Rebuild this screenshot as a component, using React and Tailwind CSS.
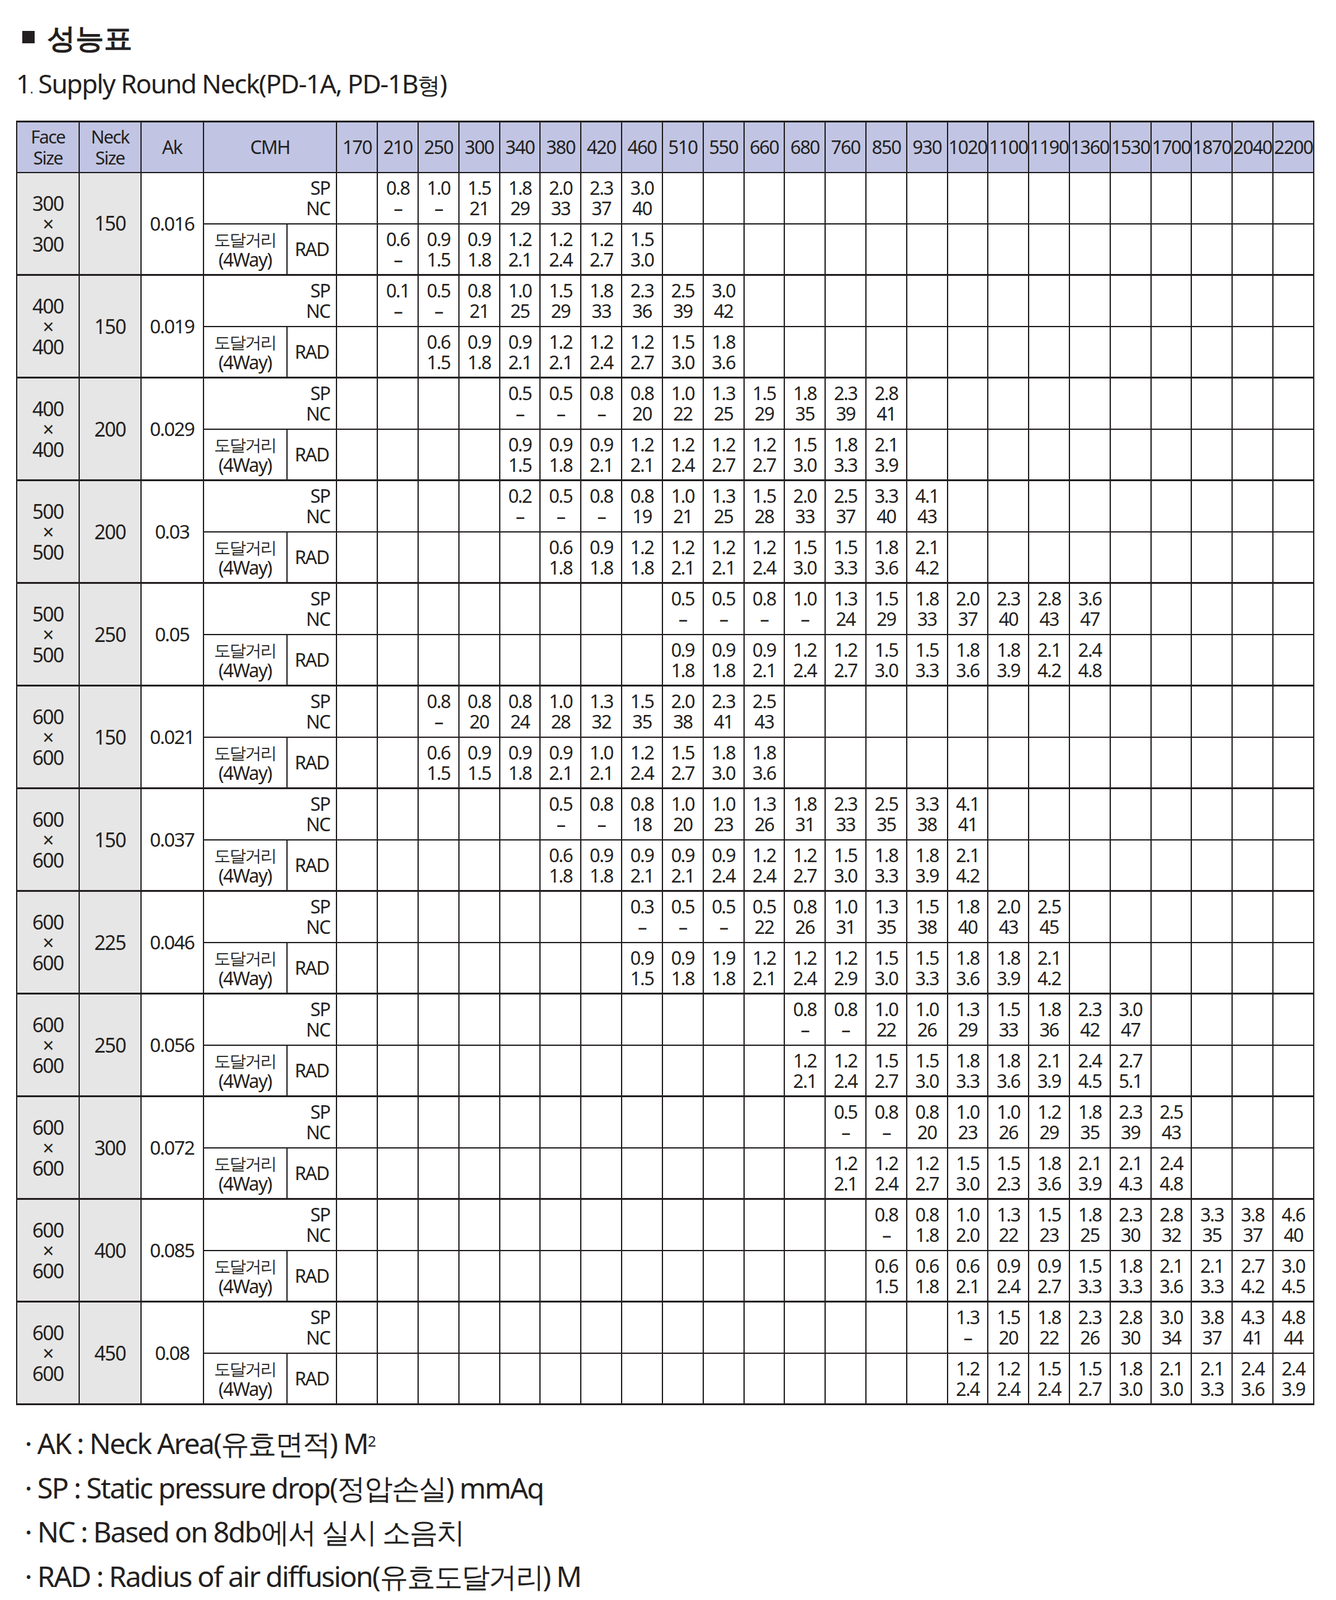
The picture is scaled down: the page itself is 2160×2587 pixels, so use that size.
import React from "react";

const COLS = [170,210,250,300,340,380,420,460,510,550,660,680,760,850,930,1020,1100,1190,1360,1530,1700,1870,2040,2200];
const d = "–";
const G = [
  ["300","150","0.016",1,["0.8","1.0","1.5","1.8","2.0","2.3","3.0"],[d,d,"21","29","33","37","40"],1,["0.6","0.9","0.9","1.2","1.2","1.2","1.5"],[d,"1.5","1.8","2.1","2.4","2.7","3.0"]],
  ["400","150","0.019",1,["0.1","0.5","0.8","1.0","1.5","1.8","2.3","2.5","3.0"],[d,d,"21","25","29","33","36","39","42"],2,["0.6","0.9","0.9","1.2","1.2","1.2","1.5","1.8"],["1.5","1.8","2.1","2.1","2.4","2.7","3.0","3.6"]],
  ["400","200","0.029",4,["0.5","0.5","0.8","0.8","1.0","1.3","1.5","1.8","2.3","2.8"],[d,d,d,"20","22","25","29","35","39","41"],4,["0.9","0.9","0.9","1.2","1.2","1.2","1.2","1.5","1.8","2.1"],["1.5","1.8","2.1","2.1","2.4","2.7","2.7","3.0","3.3","3.9"]],
  ["500","200","0.03",4,["0.2","0.5","0.8","0.8","1.0","1.3","1.5","2.0","2.5","3.3","4.1"],[d,d,d,"19","21","25","28","33","37","40","43"],5,["0.6","0.9","1.2","1.2","1.2","1.2","1.5","1.5","1.8","2.1"],["1.8","1.8","1.8","2.1","2.1","2.4","3.0","3.3","3.6","4.2"]],
  ["500","250","0.05",8,["0.5","0.5","0.8","1.0","1.3","1.5","1.8","2.0","2.3","2.8","3.6"],[d,d,d,d,"24","29","33","37","40","43","47"],8,["0.9","0.9","0.9","1.2","1.2","1.5","1.5","1.8","1.8","2.1","2.4"],["1.8","1.8","2.1","2.4","2.7","3.0","3.3","3.6","3.9","4.2","4.8"]],
  ["600","150","0.021",2,["0.8","0.8","0.8","1.0","1.3","1.5","2.0","2.3","2.5"],[d,"20","24","28","32","35","38","41","43"],2,["0.6","0.9","0.9","0.9","1.0","1.2","1.5","1.8","1.8"],["1.5","1.5","1.8","2.1","2.1","2.4","2.7","3.0","3.6"]],
  ["600","150","0.037",5,["0.5","0.8","0.8","1.0","1.0","1.3","1.8","2.3","2.5","3.3","4.1"],[d,d,"18","20","23","26","31","33","35","38","41"],5,["0.6","0.9","0.9","0.9","0.9","1.2","1.2","1.5","1.8","1.8","2.1"],["1.8","1.8","2.1","2.1","2.4","2.4","2.7","3.0","3.3","3.9","4.2"]],
  ["600","225","0.046",7,["0.3","0.5","0.5","0.5","0.8","1.0","1.3","1.5","1.8","2.0","2.5"],[d,d,d,"22","26","31","35","38","40","43","45"],7,["0.9","0.9","1.9","1.2","1.2","1.2","1.5","1.5","1.8","1.8","2.1"],["1.5","1.8","1.8","2.1","2.4","2.9","3.0","3.3","3.6","3.9","4.2"]],
  ["600","250","0.056",11,["0.8","0.8","1.0","1.0","1.3","1.5","1.8","2.3","3.0"],[d,d,"22","26","29","33","36","42","47"],11,["1.2","1.2","1.5","1.5","1.8","1.8","2.1","2.4","2.7"],["2.1","2.4","2.7","3.0","3.3","3.6","3.9","4.5","5.1"]],
  ["600","300","0.072",12,["0.5","0.8","0.8","1.0","1.0","1.2","1.8","2.3","2.5"],[d,d,"20","23","26","29","35","39","43"],12,["1.2","1.2","1.2","1.5","1.5","1.8","2.1","2.1","2.4"],["2.1","2.4","2.7","3.0","2.3","3.6","3.9","4.3","4.8"]],
  ["600","400","0.085",13,["0.8","0.8","1.0","1.3","1.5","1.8","2.3","2.8","3.3","3.8","4.6"],[d,"1.8","2.0","22","23","25","30","32","35","37","40"],13,["0.6","0.6","0.6","0.9","0.9","1.5","1.8","2.1","2.1","2.7","3.0"],["1.5","1.8","2.1","2.4","2.7","3.3","3.3","3.6","3.3","4.2","4.5"]],
  ["600","450","0.08",15,["1.3","1.5","1.8","2.3","2.8","3.0","3.8","4.3","4.8"],[d,"20","22","26","30","34","37","41","44"],15,["1.2","1.2","1.5","1.5","1.8","2.1","2.1","2.4","2.4"],["2.4","2.4","2.4","2.7","3.0","3.0","3.3","3.6","3.9"]],
];

const bd = "border-2 border-[#231f20]";

function cells(start, a, b, last) {
  return COLS.map((_, i) => {
    const k = i - start;
    const has = k >= 0 && k < a.length;
    return (
      <td key={i} className={`${bd} ${last ? "border-b-[3px]" : ""} text-center align-middle p-0 leading-[33px]`}>
        {has ? (<><div>{a[k]}</div><div>{b[k]}</div></>) : null}
      </td>
    );
  });
}

export default function App() {
  return (
    <div className="w-[2160px] h-[2587px] bg-white text-[#231f20] font-[family-name:'Liberation_Sans_Narrow','Liberation_Sans','Noto_Sans_CJK_KR',sans-serif]">
      <div className="pt-[44px] pl-[36px] flex items-center gap-[20px] h-[76px] font-[family-name:'Noto_Sans_CJK_KR',sans-serif] font-bold text-[46px]">
        <span className="inline-block w-[20px] h-[20px] bg-[#231f20]"></span>
        <span>성능표</span>
      </div>
      <div className="mt-[34px] pl-[26px] text-[42px] leading-[50px] tracking-[-1.5px]">
        1<span className="text-[20px]">.</span> Supply Round Neck(PD-1A, PD-1B<span className="font-[family-name:'Noto_Sans_CJK_KR',sans-serif] text-[37px]">형</span>)
      </div>
      <table className="mt-[26px] ml-[26px] border-collapse table-fixed w-[2099px] text-[30px] tracking-[-1.5px] border-t-[3px] border-[#231f20]">
        <colgroup>
          <col className="w-[100px]" /><col className="w-[99px]" /><col className="w-[100px]" /><col className="w-[134px]" /><col className="w-[80px]" />
          {COLS.map((c) => <col key={c} className="w-[65.25px]" />)}
        </colgroup>
        <thead>
          <tr className="h-[82px] bg-[#c1c5e3]">
            <th className={`${bd} border-t-[3px] font-normal leading-[34px] text-[29px]`}>Face<br />Size</th>
            <th className={`${bd} border-t-[3px] font-normal leading-[34px] text-[29px]`}>Neck<br />Size</th>
            <th className={`${bd} border-t-[3px] font-normal`}>Ak</th>
            <th colSpan={2} className={`${bd} border-t-[3px] font-normal`}>CMH</th>
            {COLS.map((c) => <th key={c} className={`${bd} border-t-[3px] font-normal p-0`}>{c}</th>)}
          </tr>
        </thead>
        <tbody>
          {G.map((g, gi) => (
            <React.Fragment key={gi}>
              <tr className="h-[83px]">
                <td rowSpan={2} className={`${bd} border-b-[3px] bg-[#e6e6e6] text-center text-[32px] leading-[33px]`}>{g[0]}<br />×<br />{g[0]}</td>
                <td rowSpan={2} className={`${bd} border-b-[3px] bg-[#e6e6e6] text-center text-[32px]`}>{g[1]}</td>
                <td rowSpan={2} className={`${bd} border-b-[3px] text-center text-[31px]`}>{g[2]}</td>
                <td colSpan={2} className={`${bd} text-right pr-[10px] leading-[33px]`}>SP<br />NC</td>
                {cells(g[3], g[4], g[5], false)}
              </tr>
              <tr className="h-[83px]">
                <td className={`${bd} border-b-[3px] text-center leading-[33px]`}><span className="font-[family-name:'Noto_Sans_CJK_KR',sans-serif] text-[27px] tracking-[-2px]">도달거리</span><br />(4Way)</td>
                <td className={`${bd} border-b-[3px] text-center`}>RAD</td>
                {cells(g[6], g[7], g[8], true)}
              </tr>
            </React.Fragment>
          ))}
        </tbody>
      </table>
      <div className="mt-[26px] pl-[40px] font-[family-name:'Liberation_Serif','Noto_Serif_CJK_KR','Noto_Sans_CJK_KR',serif] text-[46px] leading-[71.5px] tracking-[-2px]">
        <div>· AK : Neck Area(유효면적) M<sup className="text-[24px]">2</sup></div>
        <div>· SP : Static pressure drop(정압손실) mmAq</div>
        <div>· NC : Based on 8db에서 실시 소음치</div>
        <div>· RAD : Radius of air diffusion(유효도달거리) M</div>
      </div>
    </div>
  );
}
